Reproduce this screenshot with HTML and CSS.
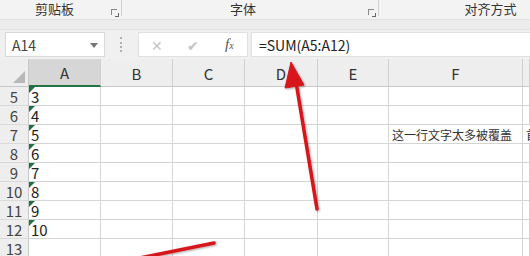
FILE: index.html
```html
<!DOCTYPE html>
<html lang="zh-CN">
<head>
    <meta charset="UTF-8">
    <title>Excel - SUM</title>
    <link rel="stylesheet" href="styles.css">
</head>
<body>
    <div class="sheet">
        <div class="ribbon">
            <div class="group g-clip">剪贴板<span class="launcher"></span></div>
            <div class="group g-font">字体<span class="launcher"></span></div>
            <div class="group g-align">对齐方式</div>
        </div>
        <div class="band"></div>
        <div class="fbar">
            <div class="namebox">A14<span class="drop"></span></div>
            <div class="grip"></div>
            <div class="fx-btns">
                <span class="btn">&#x2715;</span>
                <span class="btn">&#x2714;</span>
                <span class="fx"><i>f</i><small>x</small></span>
            </div>
            <div class="formula">=SUM(A5:A12)</div>
        </div>

        <div class="grid">
            <div class="corner"><span class="tri"></span></div>
            <div class="colhead sel">A</div>
            <div class="colhead">B</div>
            <div class="colhead">C</div>
            <div class="colhead">D</div>
            <div class="colhead">E</div>
            <div class="colhead">F</div>
            <div class="colhead"></div>
        </div>
        <div id="rows"></div>

        <svg class="arrows" width="530" height="256" viewBox="0 0 530 256">
            <defs>
                <filter id="shade" x="-20%" y="-20%" width="140%" height="140%">
                    <feDropShadow dx="1" dy="1" stdDeviation="1" flood-color="#000" flood-opacity="0.35"/>
                </filter>
            </defs>
            <g filter="url(#shade)" fill="#d7141c" stroke="#d7141c">
                <line x1="317" y1="209" x2="296" y2="82" stroke-width="3.5" stroke-linecap="round"/>
                <polygon points="291,62 285,88 304,85" stroke-width="1"/>
                <line x1="214" y1="243" x2="120" y2="262" stroke-width="3.5" stroke-linecap="round"/>
            </g>
        </svg>
    </div>

    <script>
        const values = { 5: '3', 6: '4', 7: '5', 8: '6', 9: '7', 10: '8', 11: '9', 12: '10' };
        const rows = document.getElementById('rows');

        for (let r = 5; r <= 13; r++) {
            const row = document.createElement('div');
            row.className = 'grid';
            const v = values[r];
            row.innerHTML = `
                <div class="rowhead">${r}</div>
                <div class="cell">${v ? '<span class="flag"></span>' + v : ''}</div>
                <div class="cell"></div>
                <div class="cell"></div>
                <div class="cell"></div>
                <div class="cell"></div>
                <div class="cell small">${r === 7 ? '这一行文字太多被覆盖' : ''}</div>
                <div class="cell small">${r === 7 ? '首' : ''}</div>
            `;
            rows.appendChild(row);
        }
    </script>
</body>
</html>
```

FILE: styles.css
```css
body {
    margin: 0;
    background-color: #fff;
    font-family: "Noto Sans CJK SC", "Noto Sans", sans-serif;
    color: #333;
}

.sheet {
    position: relative;
    width: 530px;
    height: 256px;
    overflow: hidden;
}

/* ribbon group labels */
.ribbon {
    display: flex;
    height: 19px;
    background-color: #f3f3f3;
    font-size: 13px;
    line-height: 18px;
}
.group {
    position: relative;
    display: flex;
    justify-content: center;
    border-right: 1px solid #d2d2d2;
    height: 16px;
}
.g-clip {
    width: 122px;
    padding-right: 16px;
    box-sizing: border-box;
    padding-left: 4px;
}
.g-font {
    width: 257px;
    padding-right: 14px;
    box-sizing: border-box;
}
.g-align {
    flex: 1;
    border-right: none;
    padding-left: 72px;
}
.launcher {
    position: absolute;
    right: 4px;
    top: 9px;
    width: 5px;
    height: 5px;
    border-left: 1px solid #888;
    border-top: 1px solid #888;
}
.launcher::after {
    content: "";
    position: absolute;
    right: -2px;
    bottom: -2px;
    width: 3px;
    height: 3px;
    border-right: 1px solid #666;
    border-bottom: 1px solid #666;
}

.band {
    height: 9px;
    background-color: #ececec;
    border-top: 1px solid #e1e1e1;
}

/* formula bar */
.fbar {
    display: flex;
    align-items: stretch;
    height: 30px;
    padding: 2px 0 2px 5px;
    box-sizing: border-box;
    background-color: #f0f0f0;
    border-top: 1px solid #e2e2e2;
}
.namebox {
    position: relative;
    width: 100px;
    background-color: #fff;
    border: 1px solid #d8d8d8;
    font-size: 14px;
    line-height: 24px;
    padding-left: 6px;
    box-sizing: border-box;
    color: #444;
}
.drop {
    position: absolute;
    right: 6px;
    top: 10px;
    border-left: 4px solid transparent;
    border-right: 4px solid transparent;
    border-top: 5px solid #777;
}
.grip {
    width: 1px;
    margin: 5px 15px;
    border-left: 2px dotted #b0b0b0;
}
.fx-btns {
    display: flex;
    align-items: center;
    width: 110px;
    background-color: #fff;
    border: 1px solid #e0e0e0;
    box-sizing: border-box;
    padding-left: 12px;
}
.btn {
    width: 36px;
    font-size: 14px;
    color: #c4c4c4;
}
.fx {
    margin-left: 2px;
    font-family: "Liberation Serif", serif;
    color: #555;
    font-size: 15px;
}
.fx small {
    font-size: 10px;
    font-style: italic;
}
.formula {
    flex: 1;
    margin-left: 3px;
    background-color: #fff;
    border: 1px solid #e0e0e0;
    border-right: none;
    font-size: 14px;
    line-height: 24px;
    padding-left: 7px;
    color: #222;
}

/* sheet grid */
.grid {
    display: grid;
    grid-template-columns: 29px 72px 72px 72px 73px 71px 134px 1fr;
}
.corner,
.colhead {
    height: 28px;
    background-color: #eeeeee;
    border-right: 1px solid #d0d0d0;
    border-bottom: 1px solid #c8c8c8;
    box-sizing: border-box;
}
.corner {
    position: relative;
    border-right-color: #c8c8c8;
}
.tri {
    position: absolute;
    right: 3px;
    bottom: 3px;
    border-left: 12px solid transparent;
    border-bottom: 12px solid #b8b8b8;
}
.colhead {
    font-size: 15px;
    line-height: 30px;
    text-align: center;
    color: #333;
}
.colhead.sel {
    background-color: #d6d6d6;
    border-bottom: 2px solid #217346;
    line-height: 28px;
}
.rowhead,
.cell {
    height: 19px;
    border-right: 1px solid #d4d4d4;
    border-bottom: 1px solid #d4d4d4;
    box-sizing: border-box;
    font-size: 15px;
    line-height: 20px;
    white-space: nowrap;
}
.rowhead {
    background-color: #eeeeee;
    border-right-color: #c8c8c8;
    border-bottom-color: #dadada;
    text-align: center;
    color: #444;
}
.cell {
    position: relative;
    padding-left: 2px;
    color: #222;
}
.cell.small {
    font-size: 12px;
    padding-left: 3px;
    color: #333;
}
.flag {
    position: absolute;
    left: 0;
    top: 0;
    border-top: 6px solid #1e7145;
    border-right: 6px solid transparent;
}

/* annotation arrows drawn over the sheet */
.arrows {
    position: absolute;
    left: 0;
    top: 0;
    pointer-events: none;
}
```
